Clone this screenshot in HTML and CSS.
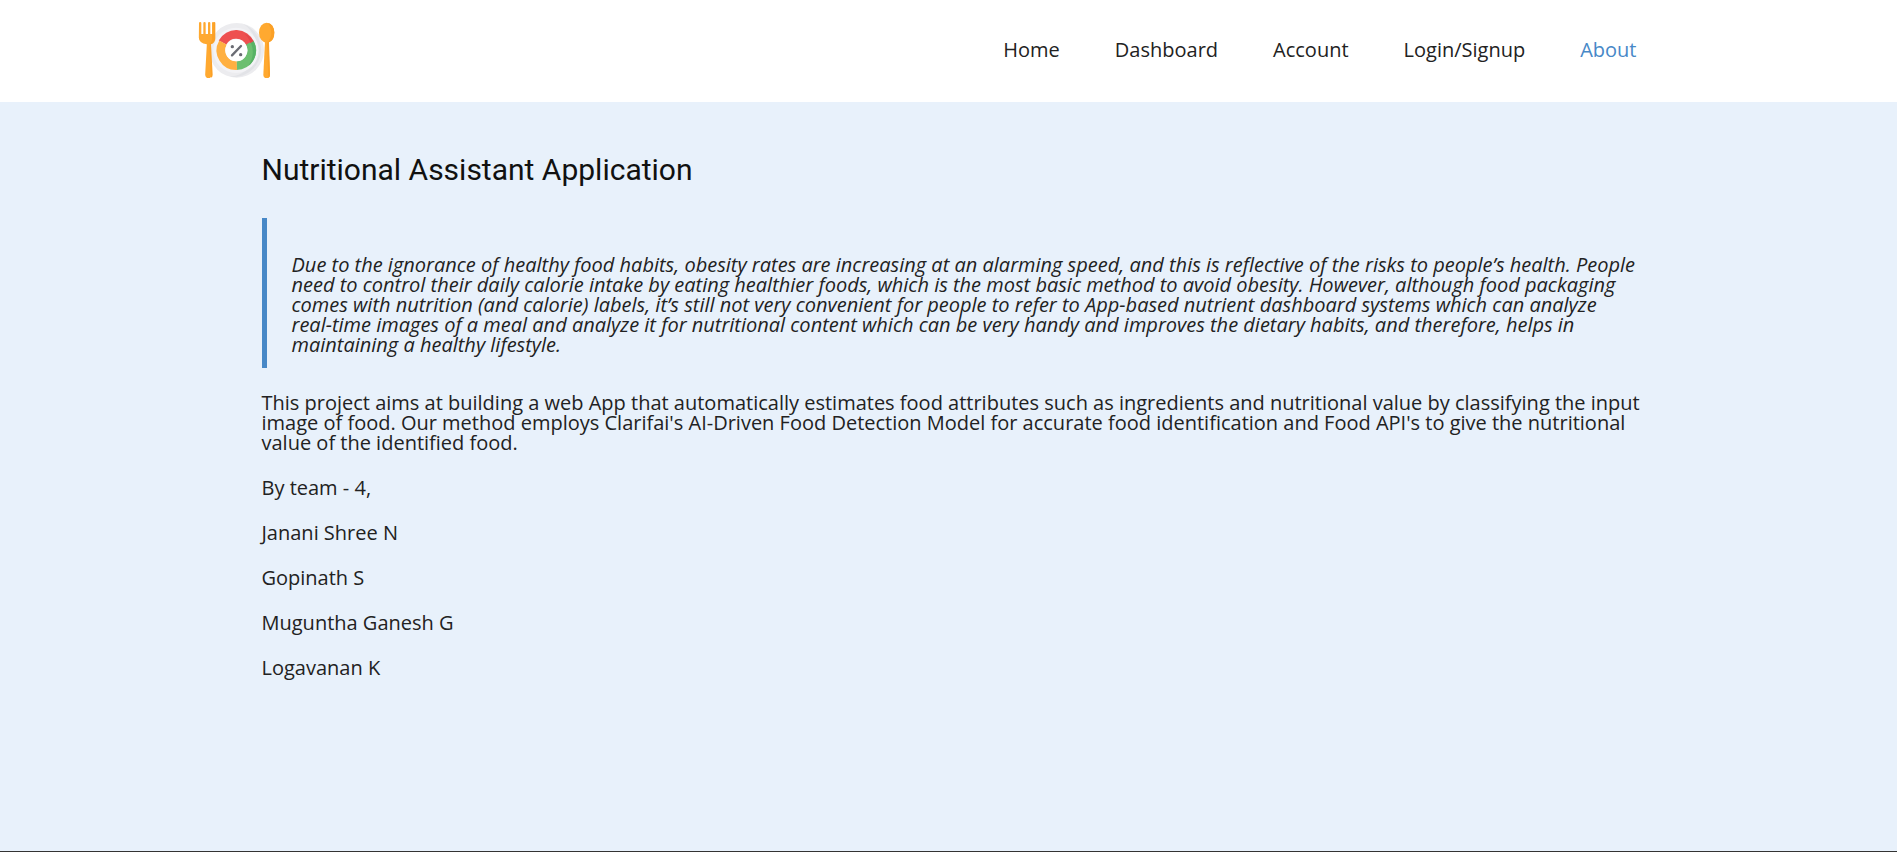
FILE: index.html
```html
<!DOCTYPE html>
<html lang="en">
<head>
<meta charset="utf-8">
<title>Nutritional Assistant Application</title>
<link rel="stylesheet" href="styles.css">
</head>
<body>
<header class="header">
  <div class="header-inner">
    <a class="logo" href="#" aria-label="Nutritional Assistant">
      <svg class="logo-icon" viewBox="54 48 231 174" aria-hidden="true">
        <circle cx="170" cy="136" r="82" fill="#ececef"/>
        <path d="M190 57a82 82 0 0 1 -40 158A86 86 0 0 0 190 57z" fill="#e2e3e7"/>
        <circle cx="168" cy="136" r="68" fill="#f3f3f6"/>
        <g fill="none" stroke-width="26">
          <path d="M127.600 112.500A46 46 0 0 1 210.400 116" stroke="#ee5050"/>
          <path d="M209 113A46 46 0 0 1 169.500 182" stroke="#6cbf70"/>
          <path d="M170.500 182A46 46 0 0 1 129 113" stroke="#ffb041"/>
        </g>
        <path d="M193 86A59 59 0 0 1 221 109L211 115A52 52 0 0 0 193 86z" fill="#e2474a"/>
        <path d="M221 109A59 59 0 0 1 204 184A75 75 0 0 0 213 114z" fill="#57b265"/>
        <circle cx="169" cy="136" r="33" fill="#fff"/>
        <path d="M156 151L183 123" stroke="#6a6c73" stroke-width="7" stroke-linecap="round"/>
        <circle cx="157" cy="125" r="5" fill="#6a6c73"/>
        <circle cx="182" cy="149" r="5" fill="#6a6c73"/>
        <path d="M57 54q0-3 3.500-3t3.500 3v33h6V54q0-3 3.500-3t3.500 3v33h7V54q0-3 3.500-3t3.500 3v33h5V54q0-3 3-3t3.500 3v46q0 14-13 18l5 91q0 10-9 10t-10-10l5-91q-24-4-24-20z" fill="#ffa930"/>
        <path d="M96 87h4V54q0-3 3-3t3 3v46q0 14-13 18l5 91q0 7-5 9l-5-101q8-4 8-14z" fill="#fba026"/>
        <ellipse cx="260" cy="83" rx="23" ry="30" fill="#ffa930"/>
        <path d="M255 108h10l5 101q0 10-10 10t-10-10z" fill="#ffa930"/>
        <path d="M264 54a23 30 0 0 1 3 58l3 97q0 7-5 9l-4-104q24-26 3-60z" fill="#fba026"/>
      </svg>
    </a>
    <nav class="nav" aria-label="Main">
      <a class="nav-link" href="#">Home</a>
      <a class="nav-link" href="#">Dashboard</a>
      <a class="nav-link" href="#">Account</a>
      <a class="nav-link" href="#">Login/Signup</a>
      <a class="nav-link nav-link-active" href="#" aria-current="page">About</a>
    </nav>
  </div>
</header>
<main class="main">
  <article class="content">
    <h1 class="title">Nutritional Assistant Application</h1>
    <blockquote class="quote">Due to the ignorance of healthy food habits, obesity rates are increasing at an alarming speed, and this is reflective of the risks to people’s health. People need to control their daily calorie intake by eating healthier foods, which is the most basic method to avoid obesity. However, although food packaging comes with nutrition (and calorie) labels, it’s still not very convenient for people to refer to App-based nutrient dashboard systems which can analyze real-time images of a meal and analyze it for nutritional content which can be very handy and improves the dietary habits, and therefore, helps in maintaining a healthy lifestyle.</blockquote>
    <p class="text">This project aims at building a web App that automatically estimates food attributes such as ingredients and nutritional value by classifying the input image of food. Our method employs Clarifai's AI-Driven Food Detection Model for accurate food identification and Food API's to give the nutritional value of the identified food.</p>
    <p class="text">By team - 4,</p>
    <p class="text">Janani Shree N</p>
    <p class="text">Gopinath S</p>
    <p class="text">Muguntha Ganesh G</p>
    <p class="text">Logavanan K</p>
  </article>
</main>
</body>
</html>
```
FILE: styles.css
```css
* {
  box-sizing: border-box;
}

body {
  display: flex;
  flex-direction: column;
  min-height: 100vh;
  margin: 0;
  background: #e8f1fb;
  color: #222;
  font: 400 20px/20px "Open Sans", "Noto Sans", sans-serif;
}

.header {
  background: #fff;
}

.header-inner {
  display: flex;
  align-items: center;
  justify-content: space-between;
  max-width: 1502px;
  margin: 0 auto;
  padding: 21px 63px 23px 0;
}

.logo-icon {
  display: block;
  width: 77px;
  height: 58px;
}

.nav {
  display: flex;
  gap: 55px;
}

.nav-link {
  color: #222;
  text-decoration: none;
}

.nav-link-active {
  color: #4788c7;
}

.main {
  flex: 1;
  border-bottom: 1px solid #333;
}

.content {
  max-width: 1502px;
  margin: 0 auto;
  padding: 48px 56px 24px 64px;
}

.title {
  margin: 0 0 28px;
  color: #111;
  font: 400 30px/40px Roboto, sans-serif;
}

.quote {
  margin: 0 0 25px;
  padding: 37px 5px 13px 25px;
  border-left: 5px solid #4788c7;
  font-style: italic;
}

.text {
  margin: 0 0 25px;
}
```
